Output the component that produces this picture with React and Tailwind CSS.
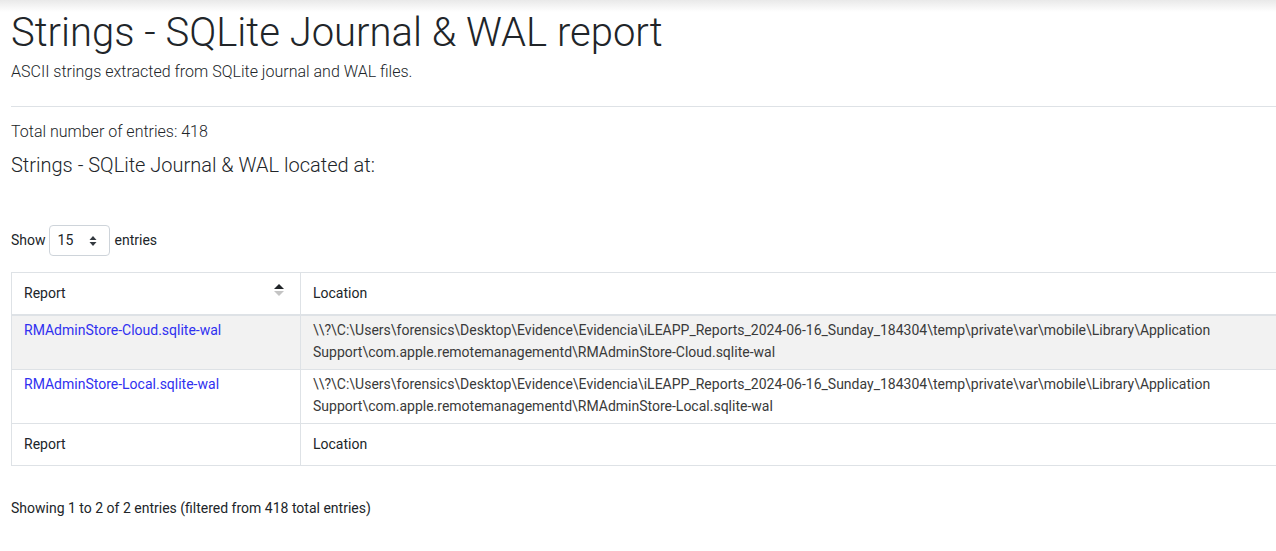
import React from 'react';

const rows = [
  {
    name: 'RMAdminStore-Cloud.sqlite-wal',
    path: '\\\\?\\C:\\Users\\forensics\\Desktop\\Evidence\\Evidencia\\iLEAPP_Reports_2024-06-16_Sunday_184304\\temp\\private\\var\\mobile\\Library\\Application Support\\com.apple.remotemanagementd\\RMAdminStore-Cloud.sqlite-wal',
  },
  {
    name: 'RMAdminStore-Local.sqlite-wal',
    path: '\\\\?\\C:\\Users\\forensics\\Desktop\\Evidence\\Evidencia\\iLEAPP_Reports_2024-06-16_Sunday_184304\\temp\\private\\var\\mobile\\Library\\Application Support\\com.apple.remotemanagementd\\RMAdminStore-Local.sqlite-wal',
  },
];

const SortIcon = () => (
  <svg width="10" height="12" viewBox="0 0 10 12" className="block">
    <path d="M5 0 L10 5 L0 5 Z" fill="#212529" />
    <path d="M0 7 L10 7 L5 12 Z" fill="#c4c4c4" />
  </svg>
);

const App = () => {
  return (
    <div className="relative min-h-[551px] w-[1276px] overflow-hidden bg-white text-[#212529]" style={{ fontFamily: 'Roboto, "Liberation Sans", sans-serif' }}>
      {/* navbar shadow */}
      <div className="absolute inset-x-0 top-0 h-[12px] bg-gradient-to-b from-[#e9e9e9] to-white/0" />

      <div className="w-[1300px] pl-[11px]">
        <h1 className="pt-[9px] text-[40px] font-light leading-[48px]">Strings - SQLite Journal &amp; WAL report</h1>
        <p className="mt-[3px] text-[16px] font-light leading-[24px]">ASCII strings extracted from SQLite journal and WAL files.</p>
        <hr className="mt-[22px] border-t border-[#dee2e6]" />

        <p className="mt-[13px] text-[16px] font-light leading-[24px]">Total number of entries: 418</p>
        <p className="mt-[9px] text-[20px] font-light leading-[24px]">Strings - SQLite Journal &amp; WAL located at:</p>

        <div className="mt-[48px] flex items-center text-[14px]">
          <span>Show</span>
          <div className="ml-[3px] mr-[5px] flex h-[31px] w-[61px] items-center justify-between rounded-[4px] border border-[#ced4da] pl-[8px] pr-[12px]">
            <span>15</span>
            <svg width="8" height="12" viewBox="0 0 8 12">
              <path d="M4 1 L7.5 5 L0.5 5 Z" fill="#343a40" />
              <path d="M0.5 7 L7.5 7 L4 11 Z" fill="#343a40" />
            </svg>
          </div>
          <span>entries</span>
        </div>

        <table className="mt-[16px] w-[1289px] border-collapse text-[14px] leading-[21px]">
          <thead>
            <tr>
              <th className="w-[289px] border border-b-2 border-[#dee2e6] px-[12px] py-[10px] text-left font-normal">
                <div className="flex items-center justify-between">
                  <span>Report</span>
                  <span className="-mt-[8px] mr-[4px]"><SortIcon /></span>
                </div>
              </th>
              <th className="border border-b-2 border-[#dee2e6] px-[12px] py-[10px] text-left font-normal">Location</th>
            </tr>
          </thead>
          <tbody>
            {rows.map((r, i) => (
              <tr key={r.name} className={i % 2 === 0 ? 'bg-[#f2f2f2]' : 'bg-white'}>
                <td className="border border-[#dee2e6] px-[12px] pb-[6px] pt-[3px] align-top leading-[22px]">
                  <a className="text-[#3030f0]">{r.name}</a>
                </td>
                <td className="border border-[#dee2e6] px-[12px] pb-[6px] pt-[3px] align-top leading-[22px] text-[#3a3a3a]">{r.path}</td>
              </tr>
            ))}
          </tbody>
          <tfoot>
            <tr>
              <td className="border border-[#dee2e6] px-[12px] py-[10px]">Report</td>
              <td className="border border-[#dee2e6] px-[12px] py-[10px]">Location</td>
            </tr>
          </tfoot>
        </table>

        <p className="mt-[32px] text-[14px] leading-[21px]">Showing 1 to 2 of 2 entries (filtered from 418 total entries)</p>
      </div>
    </div>
  );
};

export default App;
